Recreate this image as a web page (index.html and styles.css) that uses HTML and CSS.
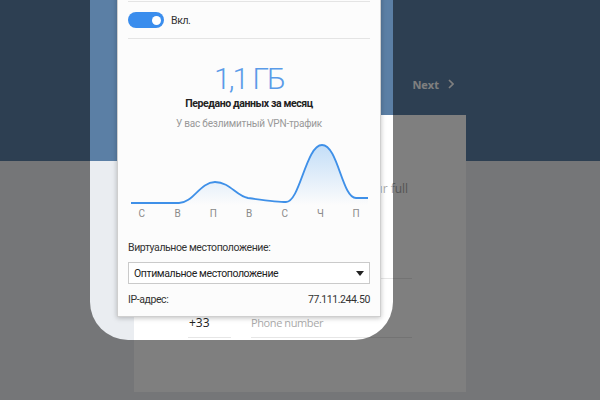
FILE: index.html
```html
<!DOCTYPE html>
<html lang="ru">
  <head>
    <meta charset="UTF-8" />
    <meta name="viewport" content="width=device-width, initial-scale=1.0" />
    <title>VPN</title>
    <link rel="stylesheet" href="styles.css">
  </head>
  <body>
    <header class="topbar">
      <div class="topbar-inner">
        <a class="nav-link">Back</a>
        <a class="nav-link">
          Next
          <svg class="chevron" width="6" height="10" viewBox="0 0 6 10">
            <polyline points="1,1 5,5 1,9" />
          </svg>
        </a>
      </div>
    </header>

    <main class="card">
      <h2 class="card-title">Your details</h2>
      <p class="card-text">To continue, please enter both your full<br />name and phone number.</p>
      <div class="field"><span class="placeholder">Full name</span></div>
      <div class="field-row">
        <div class="field field-code">+33</div>
        <div class="field field-phone"><span class="placeholder">Phone number</span></div>
      </div>
    </main>

    <!-- dims the page around the popup -->
    <div class="spotlight"></div>

    <section class="vpn-panel">
      <div class="panel-head"></div>

      <div class="toggle-row">
        <span class="switch"><span class="knob"></span></span>
        <span>Вкл.</span>
      </div>

      <div class="usage">
        <div class="usage-amount">1,1 ГБ</div>
        <div class="usage-title">Передано данных за месяц</div>
        <div class="usage-note">У вас безлимитный VPN-трафик</div>
        <svg class="usage-chart" width="244" height="70" viewBox="0 0 244 70">
          <defs>
            <linearGradient id="chartFill" x1="0" y1="0" x2="0" y2="1">
              <stop offset="0" stop-color="#5aa5ef" stop-opacity="0.35" />
              <stop offset="1" stop-color="#5aa5ef" stop-opacity="0" />
            </linearGradient>
          </defs>
          <path class="chart-area" d="M3,68 L51,68 C65,68 72,47 87,47 C102,47 108,61 120,63 C135,65 150,67 158,67 C172,67 178,10 194,10 C210,10 214,63 228,63 L240,63 L240,70 L3,70 Z" />
          <path class="chart-line" d="M3,68 L51,68 C65,68 72,47 87,47 C102,47 108,61 120,63 C135,65 150,67 158,67 C172,67 178,10 194,10 C210,10 214,63 228,63 L240,63" />
        </svg>
        <div class="chart-days">
          <span>С</span>
          <span>В</span>
          <span>П</span>
          <span>В</span>
          <span>С</span>
          <span>Ч</span>
          <span>П</span>
        </div>
      </div>

      <div class="location">
        <div class="location-label">Виртуальное местоположение:</div>
        <div class="select">
          <span>Оптимальное местоположение</span>
          <span class="caret"></span>
        </div>
        <div class="ip-row">
          <span>IP-адрес:</span>
          <span>77.111.244.50</span>
        </div>
      </div>
    </section>
  </body>
</html>
```

FILE: styles.css
```css
body {
  margin: 0;
  width: 600px;
  height: 400px;
  overflow: hidden;
  background-color: #eaedf1;
  font-family: Roboto, "Noto Sans", sans-serif;
}

/* site header */
.topbar {
  height: 161px;
  background-color: #5b7fa5;
}
.topbar-inner {
  width: 332px;
  height: 100%;
  margin: 0 auto;
  padding: 7px 12px 0;
  box-sizing: border-box;
  display: flex;
  justify-content: space-between;
  align-items: center;
}
.nav-link {
  display: flex;
  align-items: center;
  gap: 9px;
  color: #fff;
  font-family: "Open Sans", sans-serif;
  font-size: 11px;
  font-weight: 700;
}
.chevron polyline {
  fill: none;
  stroke: #fff;
  stroke-width: 1.6;
}

/* form card */
.card {
  width: 332px;
  margin: -46px auto 0;
  padding: 20px 54px 54px;
  box-sizing: border-box;
  background-color: #fff;
  font-family: "Open Sans", sans-serif;
}
.card-title {
  margin: 0;
  font-size: 15px;
  line-height: 24px;
  text-align: center;
  color: #333;
}
.card-text {
  margin: 22px 0 0;
  font-size: 12px;
  line-height: 16px;
  white-space: nowrap;
  color: #aaa;
}
.field {
  height: 30px;
  margin-top: 35px;
  display: flex;
  align-items: center;
  border-bottom: 1px solid #e6e6e6;
  font-size: 12px;
  color: #222;
}
.placeholder {
  color: #aaa;
  font-size: 11px;
  letter-spacing: -0.4px;
}
.field-row {
  display: flex;
  gap: 20px;
  margin-top: 28px;
}
.field-row .field {
  margin-top: 0;
}
.field-code {
  width: 42px;
  padding-left: 1px;
}
.field-phone {
  flex: 1;
}

/* overlay with a rounded hole */
.spotlight {
  position: absolute;
  left: 90px;
  top: -40px;
  width: 303px;
  height: 380px;
  border-radius: 38px;
  box-shadow: 0 0 0 700px rgba(0, 0, 0, 0.5);
  pointer-events: none;
}

/* VPN popup */
.vpn-panel {
  position: absolute;
  left: 117px;
  top: -40px;
  width: 264px;
  padding: 0 10px 8px;
  box-sizing: border-box;
  background-color: #fcfcfc;
  border: 1px solid #cfcfcf;
  box-shadow: 0 1px 5px rgba(0, 0, 0, 0.25);
  font-size: 10.5px;
  letter-spacing: -0.4px;
  color: #333;
}
.panel-head {
  height: 40px;
  border-bottom: 1px solid #e4e4e4;
}
.toggle-row {
  height: 36px;
  display: flex;
  align-items: center;
  gap: 7px;
  border-bottom: 1px solid #e4e4e4;
}
.switch {
  position: relative;
  width: 36px;
  height: 16px;
  border-radius: 8px;
  background-color: #3a8ded;
}
.knob {
  position: absolute;
  right: 3px;
  top: 3.5px;
  width: 9px;
  height: 9px;
  border-radius: 50%;
  background-color: #fff;
}

.usage {
  padding-top: 23px;
  text-align: center;
}
.usage-amount {
  font-size: 30px;
  font-weight: 300;
  line-height: 34px;
  letter-spacing: -2px;
  color: #5a9be8;
}
.usage-title {
  font-weight: 700;
  line-height: 16px;
  color: #222;
}
.usage-note {
  margin-top: 4px;
  font-size: 10px;
  line-height: 16px;
  letter-spacing: -0.2px;
  color: #999;
}
.usage-chart {
  display: block;
  margin-top: 3px;
}
.chart-area {
  fill: url(#chartFill);
}
.chart-line {
  fill: none;
  stroke: #3f90e8;
  stroke-width: 1.8;
}
.chart-days {
  display: flex;
  justify-content: space-between;
  margin: 2px -4px 0;
  font-size: 10px;
  line-height: 14px;
  letter-spacing: 0;
  color: #8a8a8a;
}
.chart-days span {
  width: 36px;
}

.location-label {
  margin-top: 19px;
  line-height: 16px;
}
.select {
  height: 22px;
  margin-top: 6px;
  padding: 0 5px;
  box-sizing: border-box;
  display: flex;
  justify-content: space-between;
  align-items: center;
  background-color: #fff;
  border: 1px solid #cacaca;
  color: #222;
}
.caret {
  border-left: 4px solid transparent;
  border-right: 4px solid transparent;
  border-top: 5px solid #222;
}
.ip-row {
  margin-top: 8px;
  line-height: 16px;
  display: flex;
  justify-content: space-between;
}
```
